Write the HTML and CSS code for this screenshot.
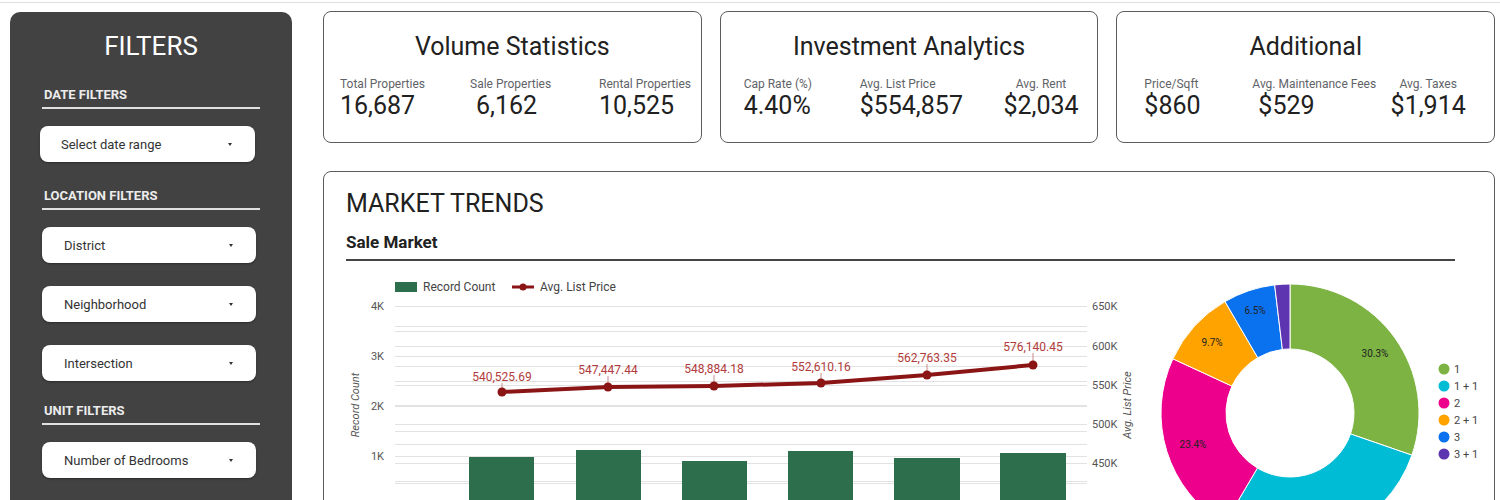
FILE: index.html
```html
<!DOCTYPE html>
<html lang="en">
<head>
  <meta charset="UTF-8">
  <meta name="viewport" content="width=device-width, initial-scale=1.0">
  <title>Real Estate Market Dashboard</title>
  <link rel="stylesheet" href="styles.css">
</head>
<body>
  <div class="topbar"></div>
  <div class="layout">
    <!-- Filters Sidebar -->
    <aside class="sidebar">
      <h1 class="sidebar-title">FILTERS</h1>

      <h2 class="filter-heading">DATE FILTERS</h2>
      <div class="dropdown dropdown--date"><span>Select date range</span><i class="caret"></i></div>

      <h2 class="filter-heading">LOCATION FILTERS</h2>
      <div class="dropdown"><span>District</span><i class="caret"></i></div>
      <div class="dropdown"><span>Neighborhood</span><i class="caret"></i></div>
      <div class="dropdown"><span>Intersection</span><i class="caret"></i></div>

      <h2 class="filter-heading filter-heading--unit">UNIT FILTERS</h2>
      <div class="dropdown"><span>Number of Bedrooms</span><i class="caret"></i></div>
    </aside>

    <main class="main">
      <!-- Scorecards -->
      <section class="cards">
        <div class="card">
          <h2 class="card-title">Volume Statistics</h2>
          <div class="stats stats--volume">
            <div class="stat"><div class="stat-label">Total Properties</div><div class="stat-value">16,687</div></div>
            <div class="stat"><div class="stat-label">Sale Properties</div><div class="stat-value stat-value--inset">6,162</div></div>
            <div class="stat"><div class="stat-label">Rental Properties</div><div class="stat-value">10,525</div></div>
          </div>
        </div>
        <div class="card">
          <h2 class="card-title">Investment Analytics</h2>
          <div class="stats stats--invest">
            <div class="stat"><div class="stat-label">Cap Rate (%)</div><div class="stat-value">4.40%</div></div>
            <div class="stat"><div class="stat-label">Avg. List Price</div><div class="stat-value">$554,857</div></div>
            <div class="stat stat--center"><div class="stat-label">Avg. Rent</div><div class="stat-value">$2,034</div></div>
          </div>
        </div>
        <div class="card">
          <h2 class="card-title">Additional</h2>
          <div class="stats stats--extra">
            <div class="stat"><div class="stat-label">Price/Sqft</div><div class="stat-value">$860</div></div>
            <div class="stat"><div class="stat-label">Avg. Maintenance Fees</div><div class="stat-value stat-value--inset">$529</div></div>
            <div class="stat stat--center"><div class="stat-label">Avg. Taxes</div><div class="stat-value">$1,914</div></div>
          </div>
        </div>
      </section>

      <!-- Market Trends -->
      <section class="trends">
        <h2 class="trends-title">MARKET TRENDS</h2>
        <h3 class="trends-sub">Sale Market</h3>
        <div class="charts">
          <svg class="combo-chart" width="794" height="240" viewBox="346 261 794 240">
            <!-- legend -->
            <rect x="395" y="282" width="22" height="10" fill="#2d6e4c"/>
            <text x="423" y="291" class="legend-text">Record Count</text>
            <line x1="512" y1="287" x2="534" y2="287" stroke="#8b1515" stroke-width="3"/>
            <circle cx="523" cy="287" r="3.5" fill="#8b1515"/>
            <text x="540" y="291" class="legend-text">Avg. List Price</text>

            <!-- grid -->
            <g stroke="#e2e2e2" stroke-width="1">
              <line x1="395" x2="1087" y1="306.5" y2="306.5"/>
              <line x1="395" x2="1087" y1="326.5" y2="326.5"/>
              <line x1="395" x2="1087" y1="331.5" y2="331.5"/>
              <line x1="395" x2="1087" y1="346.5" y2="346.5"/>
              <line x1="395" x2="1087" y1="356.5" y2="356.5"/>
              <line x1="395" x2="1087" y1="366.5" y2="366.5"/>
              <line x1="395" x2="1087" y1="381.5" y2="381.5"/>
              <line x1="395" x2="1087" y1="385.5" y2="385.5"/>
              <line x1="395" x2="1087" y1="405.5" y2="405.5"/>
              <line x1="395" x2="1087" y1="406.5" y2="406.5"/>
              <line x1="395" x2="1087" y1="424.5" y2="424.5"/>
              <line x1="395" x2="1087" y1="431.5" y2="431.5"/>
              <line x1="395" x2="1087" y1="444.5" y2="444.5"/>
              <line x1="395" x2="1087" y1="456.5" y2="456.5"/>
              <line x1="395" x2="1087" y1="463.5" y2="463.5"/>
              <line x1="395" x2="1087" y1="481.5" y2="481.5"/>
              <line x1="395" x2="1087" y1="483.5" y2="483.5"/>
            </g>

            <!-- axes -->
            <g class="axis-text" text-anchor="end">
              <text x="384" y="310">4K</text>
              <text x="384" y="360">3K</text>
              <text x="384" y="410">2K</text>
              <text x="384" y="460">1K</text>
            </g>
            <g class="axis-text">
              <text x="1092" y="310">650K</text>
              <text x="1092" y="350">600K</text>
              <text x="1092" y="389">550K</text>
              <text x="1092" y="428">500K</text>
              <text x="1092" y="467">450K</text>
            </g>
            <text class="axis-title" transform="translate(359 405) rotate(-90)" text-anchor="middle">Record Count</text>
            <text class="axis-title" transform="translate(1131 405) rotate(-90)" text-anchor="middle">Avg. List Price</text>

            <!-- bars -->
            <g fill="#2d6e4c">
              <rect x="469" y="457" width="65" height="60"/>
              <rect x="576" y="450" width="65" height="60"/>
              <rect x="682" y="461" width="65" height="60"/>
              <rect x="788" y="451" width="65" height="60"/>
              <rect x="894" y="458" width="66" height="60"/>
              <rect x="1000" y="453" width="66" height="60"/>
            </g>

            <!-- line series -->
            <g stroke="#c98a8a" stroke-width="1">
              <line x1="502" y1="383" x2="502" y2="392"/>
              <line x1="608" y1="376" x2="608" y2="387"/>
              <line x1="714" y1="375" x2="714" y2="386"/>
              <line x1="821" y1="373" x2="821" y2="383"/>
              <line x1="927" y1="364" x2="927" y2="375"/>
              <line x1="1033" y1="353" x2="1033" y2="365"/>
            </g>
            <polyline points="502,392 608,387 714,386 821,383 927,375 1033,365" fill="none" stroke="#8b1515" stroke-width="4" stroke-linejoin="round"/>
            <g fill="#8b1515">
              <circle cx="502" cy="392" r="4.5"/>
              <circle cx="608" cy="387" r="4.5"/>
              <circle cx="714" cy="386" r="4.5"/>
              <circle cx="821" cy="383" r="4.5"/>
              <circle cx="927" cy="375" r="4.5"/>
              <circle cx="1033" cy="365" r="4.5"/>
            </g>
            <g class="point-label" text-anchor="middle">
              <text x="502" y="381">540,525.69</text>
              <text x="608" y="374">547,447.44</text>
              <text x="714" y="373">548,884.18</text>
              <text x="821" y="371">552,610.16</text>
              <text x="927" y="362">562,763.35</text>
              <text x="1033" y="351">576,140.45</text>
            </g>
          </svg>

          <svg class="donut-chart" width="354" height="240" viewBox="1140 261 354 240">
            <g stroke="#fff" stroke-width="1">
              <path fill="#7cb342" d="M1290,284 A129,129 0 0 1 1411.92,455.17 L1350.49,433.92 A64,64 0 0 0 1290,349 Z"/>
              <path fill="#00bcd4" d="M1411.92,455.17 A129,129 0 0 1 1224.34,524.03 L1257.42,468.08 A64,64 0 0 0 1350.49,433.92 Z"/>
              <path fill="#ec008c" d="M1224.34,524.03 A129,129 0 0 1 1172.92,358.82 L1231.91,386.12 A64,64 0 0 0 1257.42,468.08 Z"/>
              <path fill="#ffa300" d="M1172.92,358.82 A129,129 0 0 1 1225.02,301.56 L1257.76,357.71 A64,64 0 0 0 1231.91,386.12 Z"/>
              <path fill="#0a72ee" d="M1225.02,301.56 A129,129 0 0 1 1274.64,284.92 L1282.38,349.45 A64,64 0 0 0 1257.76,357.71 Z"/>
              <path fill="#5e35b1" d="M1274.64,284.92 A129,129 0 0 1 1290,284 L1290,349 A64,64 0 0 0 1282.38,349.45 Z"/>
            </g>
            <g class="slice-label" text-anchor="middle">
              <text x="1375" y="357">30.3%</text>
              <text x="1193" y="448">23.4%</text>
              <text x="1212" y="346">9.7%</text>
              <text x="1255" y="314">6.5%</text>
            </g>
            <g class="donut-legend">
              <circle cx="1444" cy="369" r="5.5" fill="#7cb342"/>
              <circle cx="1444" cy="386" r="5.5" fill="#00bcd4"/>
              <circle cx="1444" cy="403" r="5.5" fill="#ec008c"/>
              <circle cx="1444" cy="420" r="5.5" fill="#ffa300"/>
              <circle cx="1444" cy="437" r="5.5" fill="#0a72ee"/>
              <circle cx="1444" cy="454" r="5.5" fill="#5e35b1"/>
              <text x="1454" y="373">1</text>
              <text x="1454" y="390">1 + 1</text>
              <text x="1454" y="407">2</text>
              <text x="1454" y="424">2 + 1</text>
              <text x="1454" y="441">3</text>
              <text x="1454" y="458">3 + 1</text>
            </g>
          </svg>
        </div>
      </section>
    </main>
  </div>
</body>
</html>
```

FILE: styles.css
```css
/* General Reset */
html, body {
  margin: 0;
  padding: 0;
  overflow: hidden;
}

body, h1, h2, h3 {
  font-family: 'Roboto', 'Liberation Sans', sans-serif;
}

h1, h2, h3 {
  margin: 0;
  font-weight: normal;
}

body {
  background: #fff;
  color: #212121;
}

.topbar {
  height: 2px;
  border-bottom: 1px solid #dedede;
}

/* Layout */
.layout {
  display: flex;
  align-items: flex-start;
  padding: 8px 0 0 10px;
}

/* Sidebar */
.sidebar {
  width: 282px;
  height: 520px;
  margin-top: 1px;
  padding-top: 19px;
  box-sizing: border-box;
  background-color: #424242;
  border-radius: 10px 10px 0 0;
}

.sidebar-title {
  color: #fff;
  font-size: 26px;
  line-height: 30px;
  text-align: center;
}

.filter-heading {
  margin: 26px 32px 0;
  padding: 0 0 4px 2px;
  border-bottom: 2px solid #e0e0e0;
  color: #ececec;
  font-size: 13px;
  font-weight: bold;
  line-height: 16px;
}

.filter-heading--unit {
  margin-top: 22px;
}

.dropdown {
  display: flex;
  align-items: center;
  justify-content: space-between;
  height: 36px;
  margin: 23px 36px 0 32px;
  padding: 0 23px 0 22px;
  background: #fff;
  border-radius: 8px;
  box-shadow: 0 1px 2px rgba(0, 0, 0, 0.35);
  color: #333;
  font-size: 13px;
}

.filter-heading + .dropdown {
  margin-top: 17px;
}

.dropdown--date {
  margin-left: 30px;
  margin-right: 37px;
  padding-left: 21px;
}

.caret {
  width: 0;
  height: 0;
  border-left: 2px solid transparent;
  border-right: 2px solid transparent;
  border-top: 3px solid #333;
}

/* Main area */
.main {
  width: 1172px;
  margin-left: 31px;
}

.cards {
  display: flex;
  gap: 18px;
}

.card {
  flex: 1;
  height: 132px;
  padding-top: 20px;
  box-sizing: border-box;
  border: 1px solid #5c5c5c;
  border-radius: 8px;
}

.card-title {
  font-size: 25px;
  line-height: 30px;
  text-align: center;
  color: #212121;
}

.stats {
  display: grid;
  margin-top: 14px;
}

.stats--volume {
  grid-template-columns: 130px 129px 1fr;
  padding-left: 16px;
}

.stats--invest {
  grid-template-columns: 116px 125px 1fr;
  padding-left: 23px;
}

.stats--extra {
  grid-template-columns: 108px 128px 1fr;
  padding: 0 18px 0 27px;
}

.stat {
  white-space: nowrap;
}

.stat--center {
  text-align: center;
}

.stat-label {
  color: #5f6368;
  font-size: 12px;
  line-height: 16px;
}

.stat-value {
  color: #212121;
  font-size: 25px;
  line-height: 28px;
}

.stat-value--inset {
  padding-left: 6px;
}

/* Market trends */
.trends {
  height: 360px;
  margin-top: 28px;
  padding-left: 22px;
  border: 1px solid #5c5c5c;
  border-radius: 8px;
  overflow: hidden;
}

.trends-title {
  margin-top: 17px;
  font-size: 25px;
  line-height: 30px;
  color: #212121;
}

.trends-sub {
  margin: 13px 39px 0 0;
  padding-bottom: 7px;
  border-bottom: 2px solid #444;
  font-size: 17px;
  font-weight: bold;
  line-height: 20px;
  color: #212121;
}

.charts {
  display: flex;
}

.charts svg {
  display: block;
  font-family: 'Roboto', 'Liberation Sans', sans-serif;
}

.legend-text {
  font-size: 12px;
  fill: #444;
}

.axis-text {
  font-size: 11px;
  fill: #555;
}

.axis-title {
  font-size: 11px;
  font-style: italic;
  fill: #555;
}

.point-label {
  font-size: 12px;
  fill: #b23b3b;
}

.slice-label {
  font-size: 10px;
  fill: #222;
}

.donut-legend text {
  font-size: 11px;
  fill: #444;
}
```
